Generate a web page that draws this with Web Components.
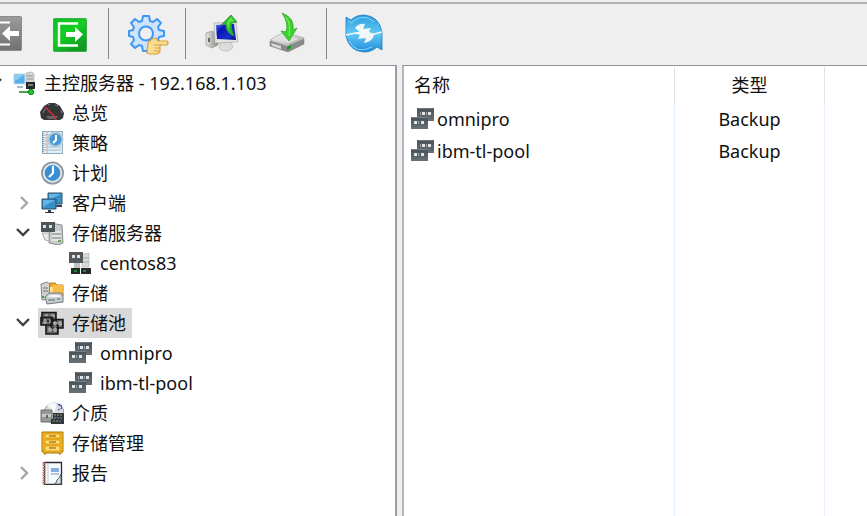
<!DOCTYPE html>
<html lang="zh-CN">
<head>
<meta charset="utf-8">
<title>主控服务器</title>
<style>
  html, body {
    height: 100%;
    margin: 0;
  }

  body {
    font: 18px/30px "Noto Sans", "Noto Sans CJK SC", sans-serif;
    color: #111;
    background: #efefef;
    overflow: hidden;
  }
</style>
</head>
<body>

<backup-console>
  <tool-bar slot="toolbar">
    <tool-button icon="exit" label="退出"></tool-button>
    <tool-button icon="enter" label="登录"></tool-button>
    <tool-separator></tool-separator>
    <tool-button icon="settings" label="设置"></tool-button>
    <tool-separator></tool-separator>
    <tool-button icon="backup" label="备份"></tool-button>
    <tool-button icon="restore" label="恢复"></tool-button>
    <tool-separator></tool-separator>
    <tool-button icon="refresh" label="刷新"></tool-button>
  </tool-bar>

  <tree-view slot="tree">
    <tree-item icon="server" label="主控服务器 - 192.168.1.103" state="open">
      <tree-item icon="gauge" label="总览"></tree-item>
      <tree-item icon="policy" label="策略"></tree-item>
      <tree-item icon="clock" label="计划"></tree-item>
      <tree-item icon="clients" label="客户端" state="closed"></tree-item>
      <tree-item icon="storage-server" label="存储服务器" state="open">
        <tree-item icon="node" label="centos83"></tree-item>
      </tree-item>
      <tree-item icon="storage" label="存储"></tree-item>
      <tree-item icon="pools" label="存储池" state="open" selected>
        <tree-item icon="pool" label="omnipro"></tree-item>
        <tree-item icon="pool" label="ibm-tl-pool"></tree-item>
      </tree-item>
      <tree-item icon="media" label="介质"></tree-item>
      <tree-item icon="cabinet" label="存储管理"></tree-item>
      <tree-item icon="report" label="报告" state="closed"></tree-item>
    </tree-item>
  </tree-view>

  <pool-list slot="list"></pool-list>
</backup-console>

<script>
const ICONS = {
  exit: `
    <defs><linearGradient id="g" x2="0" y2="1"><stop stop-color="#9b9b9b"/><stop offset="1" stop-color="#717171"/></linearGradient></defs>
    <rect x="5.5" y="6.5" width="34" height="34" rx="1" fill="url(#g)" stroke="#8b8b8b"/>
    <path d="M28 12.500H10V34.500H28" fill="none" stroke="#fff" stroke-width="2"/>
    <path d="M20 23.500L28 16V21H37V26H28V31Z" fill="#fff"/>`,
  enter: `
    <defs><linearGradient id="g" x2=".6" y2="1"><stop stop-color="#0bbd27"/><stop offset=".5" stop-color="#13cf20"/><stop offset="1" stop-color="#139a26"/></linearGradient></defs>
    <rect x="7.500" y="8.500" width="33" height="33" rx="1" fill="url(#g)" stroke="#3cae4c"/>
    <path d="M32 13.500H13V35.500H32" fill="none" stroke="#fff" stroke-width="2.400"/>
    <path d="M37 24.500L29 17V22H20V27H29V32Z" fill="#fff"/>`,
  settings: `
    <g fill="#cfe4fc" stroke="#3d97f5" stroke-width="2" stroke-linejoin="round">
      <path d="M20 6L26 6L27 11L30 12L34 9L38 13L35 17L36 20L41 21V26L36 27L35 30L38 34L34 38L30 35L27 36L26 41H20L19 36L16 35L12 38L8 34L11 30L10 27L6 26V21L10 20L11 17L8 13L12 9L16 12L19 11Z"/>
      <circle cx="23" cy="23.500" r="7" fill="#efefef"/>
    </g>
    <path d="M25 33L29 29L33 28L35 31H44Q46 33 44 35H37V40Q37 43 34 44H27L24 43Z" fill="#fbdc91" stroke="#d7a33f" stroke-width="1.200"/>
    <path d="M31 35H37M32 38H37M31 41H36" stroke="#d7a33f"/>`,
  backup: `
    <defs>
      <linearGradient id="s" x2="1" y2="1"><stop stop-color="#5878e8"/><stop offset=".3" stop-color="#0714bd"/><stop offset=".7" stop-color="#1830c8"/><stop offset="1" stop-color="#05067d"/></linearGradient>
      <linearGradient id="c"><stop stop-color="#e4e4e4"/><stop offset="1" stop-color="#858882"/></linearGradient>
    </defs>
    <path d="M6 23L12 21L18 24V35L12 38L6 35Z" fill="url(#c)" stroke="#999" stroke-width=".7"/>
    <path d="M8 28H10V32H8Z" fill="#62695e"/>
    <path d="M21 32H31L33 37Q31 41 26 41Q20 41 19 37Z" fill="#dcdddb" stroke="#b4b4b4" stroke-width=".7"/>
    <path d="M14 13L36 12L38 32L15 33Z" fill="#e1e3df" stroke="#aaa" stroke-width=".7"/>
    <path d="M16 15L34 14L36 30L17 29Z" fill="url(#s)"/>
    <path d="M34 26Q25 22 26 14L21 15L31 5L37 12L32 13Q30 18 34 26Z" fill="#27bd2b" stroke="#3c8f38" stroke-width=".8"/>
    <path d="M27 12L31 7L34 11L30 12Q28 17 30 20Q27 18 27 12Z" fill="#65df4d"/>`,
  restore: `
    <defs><linearGradient id="d" x2="1" y2="1"><stop stop-color="#fff"/><stop offset="1" stop-color="#a4a7a3"/></linearGradient></defs>
    <path d="M6 31L23 36L40 29V34L24 42L6 36Z" fill="#888c88" stroke="#777" stroke-width=".5"/>
    <path d="M6 30L20 22L40 28L23 36Z" fill="url(#d)" stroke="#aaa" stroke-width=".8"/>
    <path d="M11 30L20 25L34 29L24 33Z" fill="#dedfdd"/>
    <path d="M7 33L17 36V39L8 36Z" fill="#d7d8d7"/>
    <path d="M23 37L27 35V38L23 40Z" fill="#159c18"/>
    <path d="M18 3Q31 8 29 20L33 18L25 31L17 21L22 22Q25 13 18 3Z" fill="#3cd32d" stroke="#31a728" stroke-width=".8"/>
    <path d="M22 7Q27 14 25 26" fill="none" stroke="#84ee67"/>`,
  refresh: `
    <defs><linearGradient id="r" x2="0" y2="1"><stop stop-color="#2b9cdf"/><stop offset=".5" stop-color="#62c9f5"/><stop offset="1" stop-color="#218cdb"/></linearGradient></defs>
    <path d="M5 7L10 10Q15 5 23 5Q38 6 41 22V40L36 37Q31 42 23 42Q8 41 5 26Z" fill="url(#r)" stroke="#1f80c4" stroke-width=".8"/>
    <path d="M14 18Q18 13 24 14L22 19L30 18L28 22L33 24L32 28Q29 32 23 33L25 28L17 29L19 25L13 23L19 22Z" fill="#f1f6f9"/>
    <path d="M5 25L20 22M26 26L41 22" stroke="#f1f6f9" stroke-width="1.600"/>
    <path d="M7 11L10 13Q22 2 33 12M8 31Q15 45 31 37" fill="none" stroke="#83d8fb"/>`,
  server: `
    <path d="M14 2L20 1L22 3V15H14Z" fill="#d3d5d6" stroke="#aaa" stroke-width=".7"/>
    <path d="M15 5H21M15 8H21" stroke="#929596"/>
    <path d="M2 3H13V13H2Z" fill="#58aee7" stroke="#c5dfec"/><path d="M3 4H12L3 10Z" fill="#8bcdf2"/>
    <path d="M5 15H11V17H5Z" fill="#aabac2"/>
    <path d="M14 11H23V18H14Z" fill="#242927"/><path d="M16 13H21V15H16Z" fill="#797e7b"/>
    <path d="M18 18V21" stroke="#252a27" stroke-width="1.500"/><path d="M7 21H22" stroke="#177a1d" stroke-width="1.500"/>
    <circle cx="19" cy="21" r="2.700" fill="#20c62d" stroke="#16801d"/>`,
  gauge: `
    <path d="M1 17L0 11L4 5L9 2H15L20 5L24 12L23 17L20 19H4Z" fill="#343638"/>
    <path d="M3 12L5 8M8 4L10 3M15 4L18 5M21 9L22 12" stroke="#777" stroke-width="1.200"/>
    <path d="M6 15H18L16 18H8Z" fill="#606264"/>
    <path d="M5 6L14 15L16 19" fill="none" stroke="#d52d37" stroke-width="1.500"/>`,
  policy: `
    <rect x="2.500" y=".5" width="20" height="22" fill="#e4f0f5" stroke="#8eacbd"/>
    <path d="M4 4H21M4 7H21M4 10H21M4 13H21M4 16H21M4 19H21" stroke="#98bdd2"/>
    <path d="M3 2V22" stroke="#6891a9" stroke-width="1.500" stroke-dasharray="1 1"/><path d="M7 1V22" stroke="#e9a4a3"/>
    <circle cx="15.500" cy="8.500" r="7" fill="#4399d9" stroke="#b6c8d1" stroke-width="2"/>
    <path d="M16 4V9L13 12" fill="none" stroke="#fff" stroke-width="2"/>`,
  clock: `
    <circle cx="12.500" cy="12" r="10.500" fill="#398ed3" stroke="#929aa1" stroke-width="2"/>
    <circle cx="12.500" cy="12" r="8.800" fill="none" stroke="#e4ebef" stroke-width="1.800"/>
    <path d="M13 5V12L9 16" fill="none" stroke="#fff" stroke-width="2.200"/>`,
  clients: `
    <path d="M8 2H22V13H8Z" fill="#368fc9" stroke="#315064"/><path d="M9 3H21L9 9Z" fill="#60b5e6"/>
    <path d="M17 14H22V16H15Z" fill="#2c4453"/>
    <path d="M2 8H16V18H2Z" fill="#398fc8" stroke="#285069"/><path d="M3 9H15L3 16Z" fill="#62b5e3"/>
    <path d="M8 19H11V21H14V22H5V21H8Z" fill="#293b45"/>`,
  "storage-server": `
    <path d="M10 2L22 4L23 22L18 24L9 22Z" fill="#c8cbcb" stroke="#8a8d8d"/>
    <path d="M12 11H21M12 15H21M12 19H21" stroke="#eee" stroke-width="1.500"/><path d="M12 13H21M12 17H21" stroke="#8b8f90"/>
    <path d="M2 12H9V20L5 19Z" fill="#e8e8e8" stroke="#aaa"/>
    <path d="M1 1H15V11H1Z" fill="#4b5457"/><path d="M3 4H6V7H3ZM9 4H12V7H9Z" fill="#e0e2e2"/>
    <path d="M18 19H21V21H18Z" fill="#68a64c"/>`,
  node: `
    <path d="M14 3L21 2V16H14Z" fill="#d8dada" stroke="#b4b6b6" stroke-width=".7"/><path d="M15 7H21M15 11H21" stroke="#aaa"/>
    <path d="M6 12H12V17H6Z" fill="#bec1c2"/>
    <path d="M1 1H15V12H1Z" fill="#53595d"/><path d="M4 4H7V7H4ZM9 4H12V7H9Z" fill="#e1e4e5"/>
    <path d="M3 17H12V23H3ZM13 17H23V23H13Z" fill="#252927"/>
    <path d="M6 20H9M15 20H18" stroke="#14a941" stroke-width="1.500"/>`,
  storage: `
    <path d="M1 3L7 1L10 3V18L2 19Z" fill="#d0d2ce" stroke="#858784"/>
    <path d="M3 7H8M3 10H8" stroke="#777"/><path d="M2 15H4V17H2Z" fill="#2aaa35"/>
    <path d="M10 2H15L17 4H23V15H9Z" fill="#efad29" stroke="#b77a21"/><path d="M10 6H22V14H10Z" fill="#ffe28a"/><path d="M13 4H23V12H13Z" fill="#f7bf47"/>
    <path d="M5 16L9 12H21L23 15V21L7 23Z" fill="#c9ced3" stroke="#70777d"/>
    <path d="M8 16H21L19 14H10Z" fill="#f7f7f7"/><path d="M8 19H15" stroke="#5c6468"/><path d="M17 18H20" stroke="#3bba32" stroke-width="1.500"/>`,
  pools: `
    <g stroke="#191919" stroke-width="1.600" fill="#686868"><path d="M2 1.500H16V10H2ZM1 6.500H12V14H1ZM11 8.500H23V17H11ZM6 14H18V23H6Z"/></g>
    <g fill="none" stroke="#ccc"><path d="M5 4H8M11 4H14V6M4 9H6V12H4ZM9 9H10V12M14 11H16V14H14ZM19 11H21V14H19ZM9 17H11V20H9ZM14 17H16V20H14Z"/></g>`,
  pool: `
    <defs><linearGradient id="p" x2="0" y2="1"><stop stop-color="#465157"/><stop offset="1" stop-color="#687177"/></linearGradient></defs>
    <path d="M7 1H24V14H7Z" fill="url(#p)"/><path d="M8 1.500H23" stroke="#6f797f"/>
    <path d="M1 10H18V22H1Z" fill="url(#p)"/><path d="M1 10.500H18" stroke="#768087"/>
    <path d="M12 5H15V8H12ZM18 5H21V8H18ZM4 14H7V17H4ZM11 14H14V17H11Z" fill="#e2e5e6"/>
    <path d="M10 5H11V8H10ZM16 5H17V8H16ZM8 14H9V17H8Z" fill="#a1a8ac"/>`,
  media: `
    <circle cx="14" cy="12" r="10" fill="#d8dddc" stroke="#939b9b"/><path d="M14 12L7 4Q13 0 17 3Z" fill="#f8f8f8"/>
    <path d="M1 9H12V21H1Z" fill="#949896" stroke="#6d716f"/><path d="M2 13H11V16H2Z" fill="#c9cbca"/><path d="M6 14H8V17H6Z" fill="#5f6361"/>
    <path d="M18 4Q22 2 22 7L18 9M19 4L22 6" fill="none" stroke="#252cc6" stroke-dasharray="2 1"/>
    <path d="M13 12H24V23H11V18H13Z" fill="#333833"/><path d="M14 14H22M14 17H22M13 20H22" stroke="#8c9891" stroke-dasharray="2 1"/><path d="M15 15L21 21" stroke="#3446a5"/>`,
  cabinet: `
    <path d="M2 1H23V21H21V23H19V22H6V23H4V21H2Z" fill="#f1b51b" stroke="#ac7914"/>
    <path d="M5 3H20V7H5ZM5 9H20V13H5ZM5 15H20V20H5Z" fill="#ffe276" stroke="#dc9818"/>
    <path d="M9 5H16M9 11H16M9 17H16" stroke="#b87e19" stroke-width="1.500"/>`,
  report: `
    <path d="M4.500 1.500H21.500V23.500H4.500Z" fill="#f8f9fb" stroke="#282d33" stroke-width="1.300"/>
    <path d="M4 1V24" stroke="#b0705f" stroke-width="3" stroke-dasharray="1.500 1"/><path d="M8 2V23" stroke="#b9d1e4"/>
    <path d="M11 7H19V11H11Z" fill="#88ade0"/><path d="M11 13H19" stroke="#7797be"/>
    <path d="M14 23Q17 22 17 19Q20 17 21 13V23Z" fill="#dce3ea" stroke="#555c64"/>`
};

class UiIcon extends HTMLElement {
  constructor() {
    super();
    this.attachShadow({mode: "open"});
  }

  connectedCallback() {
    const size = this.getAttribute("size") || "24";
    this.shadowRoot.innerHTML = `
      <style>
        :host { display: block; flex: none; width: ${size}px; height: ${size}px; }
        svg { display: block; }
      </style>
      <svg width="${size}" height="${size}" viewBox="0 0 ${size} ${size}" aria-hidden="true">${ICONS[this.getAttribute("name")]}</svg>
    `;
  }
}

class ToolButton extends HTMLElement {
  constructor() {
    super();
    this.attachShadow({mode: "open"});
  }

  connectedCallback() {
    this.shadowRoot.innerHTML = `
      <style>
        :host { display: block; flex: none; }

        button {
          display: flex;
          align-items: center;
          justify-content: center;
          width: 64px;
          height: 60px;
          padding: 0;
          border: 0;
          background: none;
        }

        button:hover { background: #e5f0fa; }
      </style>
      <button type="button" aria-label="${this.getAttribute("label")}">
        <ui-icon name="${this.getAttribute("icon")}" size="48"></ui-icon>
      </button>
    `;
  }
}

class ToolSeparator extends HTMLElement {
  constructor() {
    super();
    this.attachShadow({mode: "open"}).innerHTML = `
      <style>
        :host {
          display: block;
          flex: none;
          width: 1px;
          margin: 4px 6px 5px;
          background: #858585;
        }
      </style>
    `;
  }
}

class ToolBar extends HTMLElement {
  constructor() {
    super();
    // the first button is partly scrolled out on the left
    this.attachShadow({mode: "open"}).innerHTML = `
      <style>
        :host {
          display: block;
          overflow: hidden;
          margin-top: 2px;
          padding-bottom: 1px;
          border-top: 2px solid #b2b2b2;
        }

        .buttons { display: flex; margin-left: -26px; }
      </style>
      <div class="buttons" role="toolbar"><slot></slot></div>
    `;
  }
}

class TreeView extends HTMLElement {
  constructor() {
    super();
    this.attachShadow({mode: "open"}).innerHTML = `
      <style>
        :host { display: block; overflow: hidden; padding-top: 2px; }
        .tree { margin-left: -18px; }
      </style>
      <div class="tree" role="tree"><slot></slot></div>
    `;
  }
}

class TreeItem extends HTMLElement {
  constructor() {
    super();
    this.attachShadow({mode: "open"});
  }

  connectedCallback() {
    this.render();
  }

  toggle() {
    this.setAttribute("state", this.getAttribute("state") === "open" ? "closed" : "open");
    this.render();
  }

  render() {
    const state = this.getAttribute("state");
    const arrow = state === "open"
      ? `<path d="M7 11L13 17L19 11" stroke="#404040"/>`
      : `<path d="M11 9L17 15L11 21" stroke="#a6a6a6"/>`;

    this.shadowRoot.innerHTML = `
      <style>
        :host { display: block; }
        .row { display: flex; height: 30px; }

        button {
          padding: 0;
          border: 0;
          background: none;
          color: inherit;
          font: inherit;
          white-space: nowrap;
        }

        .toggle { flex: none; width: 28px; }
        .toggle svg { display: block; fill: none; stroke-width: 2.4; }

        .label {
          display: flex;
          align-items: center;
          gap: 8px;
          padding: 0 6px 0 2px;
        }

        :host([selected]) .label { background: #d9d9d9; }
        .group { padding-left: 28px; }
        :host([state="closed"]) .group { display: none; }
      </style>
      <div class="row" role="treeitem">
        ${state
          ? `<button class="toggle" type="button" aria-label="展开"><svg width="28" height="30">${arrow}</svg></button>`
          : `<span class="toggle"></span>`}
        <button class="label" type="button">
          <ui-icon name="${this.getAttribute("icon")}"></ui-icon>
          <span>${this.getAttribute("label")}</span>
        </button>
      </div>
      <div class="group" role="group"><slot></slot></div>
    `;

    if (state) {
      this.shadowRoot.querySelector(".toggle").addEventListener("click", () => this.toggle());
    }
  }
}

class PoolList extends HTMLElement {
  constructor() {
    super();
    this.attachShadow({mode: "open"});
    this.pools = [
      {name: "omnipro", type: "Backup"},
      {name: "ibm-tl-pool", type: "Backup"}
    ];
  }

  connectedCallback() {
    this.shadowRoot.innerHTML = `
      <style>
        :host { display: block; padding-top: 1px; }

        table {
          width: 100%;
          height: 100%;
          table-layout: fixed;
          border-collapse: separate;
          border-spacing: 0;
        }

        .type { width: 150px; }
        .rest { width: 42px; }

        th, td {
          height: 32px;
          padding: 0;
          border-right: 1px solid #e4f0fb;
          font-weight: normal;
          text-align: center;
        }

        th { height: 36px; border-color: #e2e2e2; }
        th:first-child { padding-left: 10px; text-align: left; }
        th:last-child, td:last-child { border-right: 0; }
        .filler td { height: auto; }

        .name {
          display: flex;
          align-items: center;
          gap: 3px;
          padding-left: 6px;
        }
      </style>
      <table>
        <colgroup><col><col class="type"><col class="rest"></colgroup>
        <thead>
          <tr><th scope="col">名称</th><th scope="col">类型</th><th></th></tr>
        </thead>
        <tbody>
          ${this.pools.map(pool => `
            <tr>
              <td><div class="name"><ui-icon name="pool"></ui-icon><span>${pool.name}</span></div></td>
              <td>${pool.type}</td>
              <td></td>
            </tr>`).join("")}
          <tr class="filler"><td></td><td></td><td></td></tr>
        </tbody>
      </table>
    `;
  }
}

class BackupConsole extends HTMLElement {
  constructor() {
    super();
    this.attachShadow({mode: "open"}).innerHTML = `
      <style>
        :host {
          display: flex;
          flex-direction: column;
          height: 100vh;
        }

        .panes {
          flex: 1;
          display: grid;
          grid-template-columns: 397fr 465fr;
          gap: 5px;
          min-height: 0;
        }

        .pane {
          display: grid;
          min-width: 0;
          overflow: hidden;
          background: #fff;
          border-top: 1px solid #8f939b;
        }

        .left { border-right: 2px solid #9a9ea6; }
        .right { border-left: 2px solid #b4b7bd; }
      </style>
      <slot name="toolbar"></slot>
      <main class="panes">
        <div class="pane left"><slot name="tree"></slot></div>
        <div class="pane right"><slot name="list"></slot></div>
      </main>
    `;
  }
}

customElements.define("ui-icon", UiIcon);
customElements.define("tool-button", ToolButton);
customElements.define("tool-separator", ToolSeparator);
customElements.define("tool-bar", ToolBar);
customElements.define("tree-item", TreeItem);
customElements.define("tree-view", TreeView);
customElements.define("pool-list", PoolList);
customElements.define("backup-console", BackupConsole);
</script>
</body>
</html>
